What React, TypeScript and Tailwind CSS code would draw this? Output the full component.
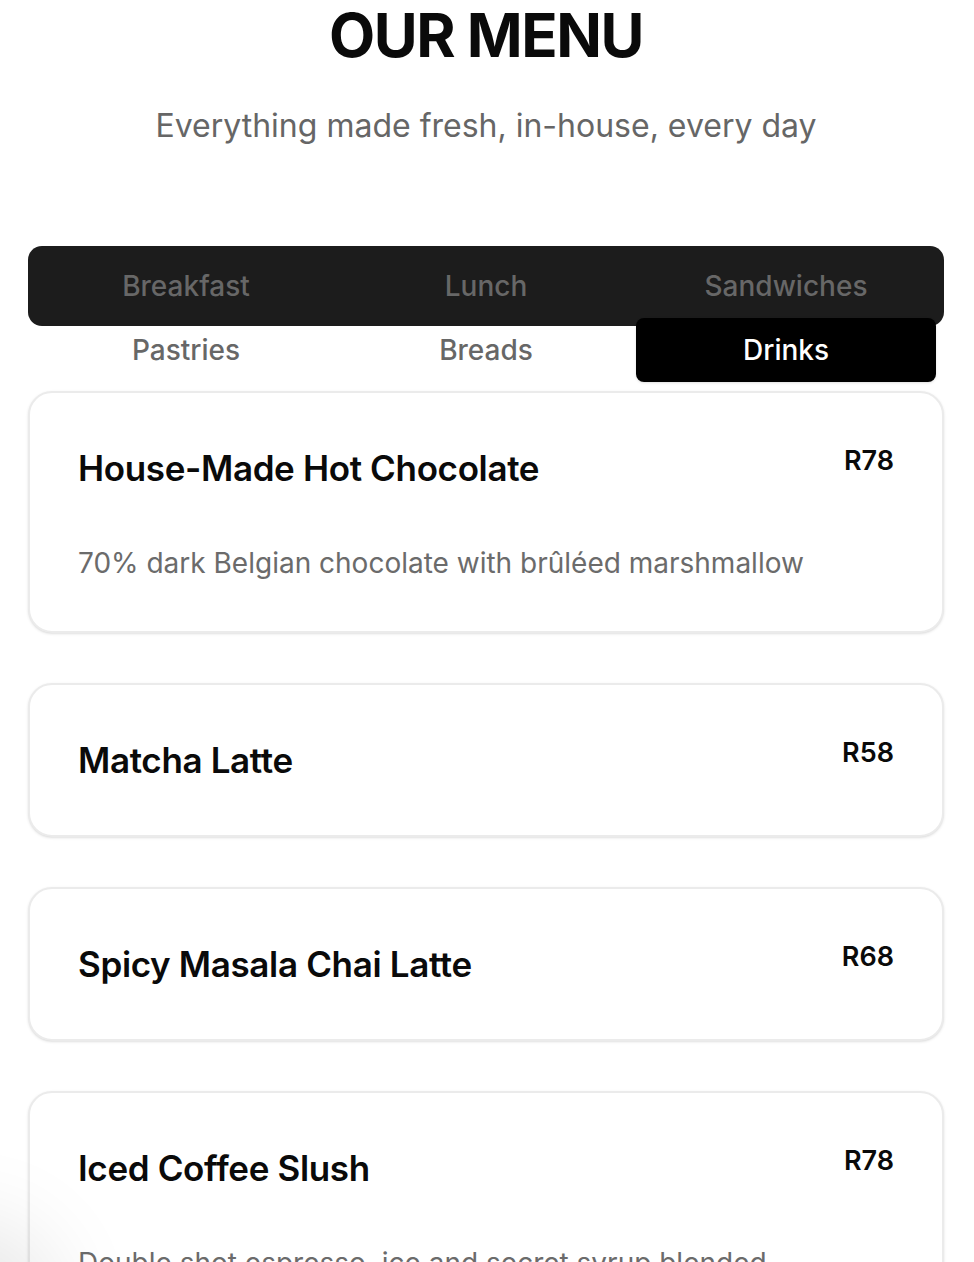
import React from 'react';

const tabs = ['Breakfast', 'Lunch', 'Sandwiches', 'Pastries', 'Breads', 'Drinks'];

const items = [
  {
    name: 'House-Made Hot Chocolate',
    price: 'R78',
    description: '70% dark Belgian chocolate with brûléed marshmallow',
  },
  { name: 'Matcha Latte', price: 'R58' },
  { name: 'Spicy Masala Chai Latte', price: 'R68' },
  {
    name: 'Iced Coffee Slush',
    price: 'R78',
    description: 'Double shot espresso, ice and secret syrup blended deliciously smooth',
  },
];

export default function App() {
  const active = 'Drinks';

  return (
    <div className="relative min-h-screen overflow-hidden bg-white pl-7 pr-[30px] pt-[5px] pb-20 font-['Inter',sans-serif] text-[#0a0a0a]">
      {/* Header */}
      <h1 className="text-center text-[60px] font-bold leading-none tracking-tight">OUR MENU</h1>
      <p className="mt-[37px] text-center text-[32px] leading-[48px] text-[#666666]">
        Everything made fresh, in-house, every day
      </p>

      {/* Tabs */}
      <div className="mt-[96px] grid h-20 grid-cols-3 rounded-[14px] bg-[#1c1c1c] p-2">
        {tabs.map((tab) => (
          <button
            key={tab}
            className={
              tab === active
                ? 'flex h-16 items-center justify-center rounded-[8px] bg-black text-[28px] font-medium text-white shadow-sm'
                : 'flex h-16 items-center justify-center text-[28px] font-medium text-[#676767]'
            }
          >
            {tab}
          </button>
        ))}
      </div>

      {/* Items */}
      <div className="mt-[65px] flex flex-col gap-[50px]">
        {items.map((item) => (
          <div
            key={item.name}
            className="flex flex-col gap-12 rounded-[24px] border-2 border-[#ebebeb] bg-white px-12 py-12 shadow-sm"
          >
            <div className="flex items-start justify-between gap-6">
              <h3 className="text-[35px] font-semibold leading-[54px] tracking-[-0.01em]">{item.name}</h3>
              <span className="text-[27px] font-semibold leading-[40px]">{item.price}</span>
            </div>
            {item.description && (
              <p className="text-[28px] leading-[40px] text-[#6b6b6b]">{item.description}</p>
            )}
          </div>
        ))}
      </div>

      {/* floating button shadow peeking in */}
      <div className="pointer-events-none fixed -bottom-24 -left-20 h-24 w-24 rounded-full bg-white shadow-[0_0_90px_40px_rgba(0,0,0,0.1)]" />
    </div>
  );
}
